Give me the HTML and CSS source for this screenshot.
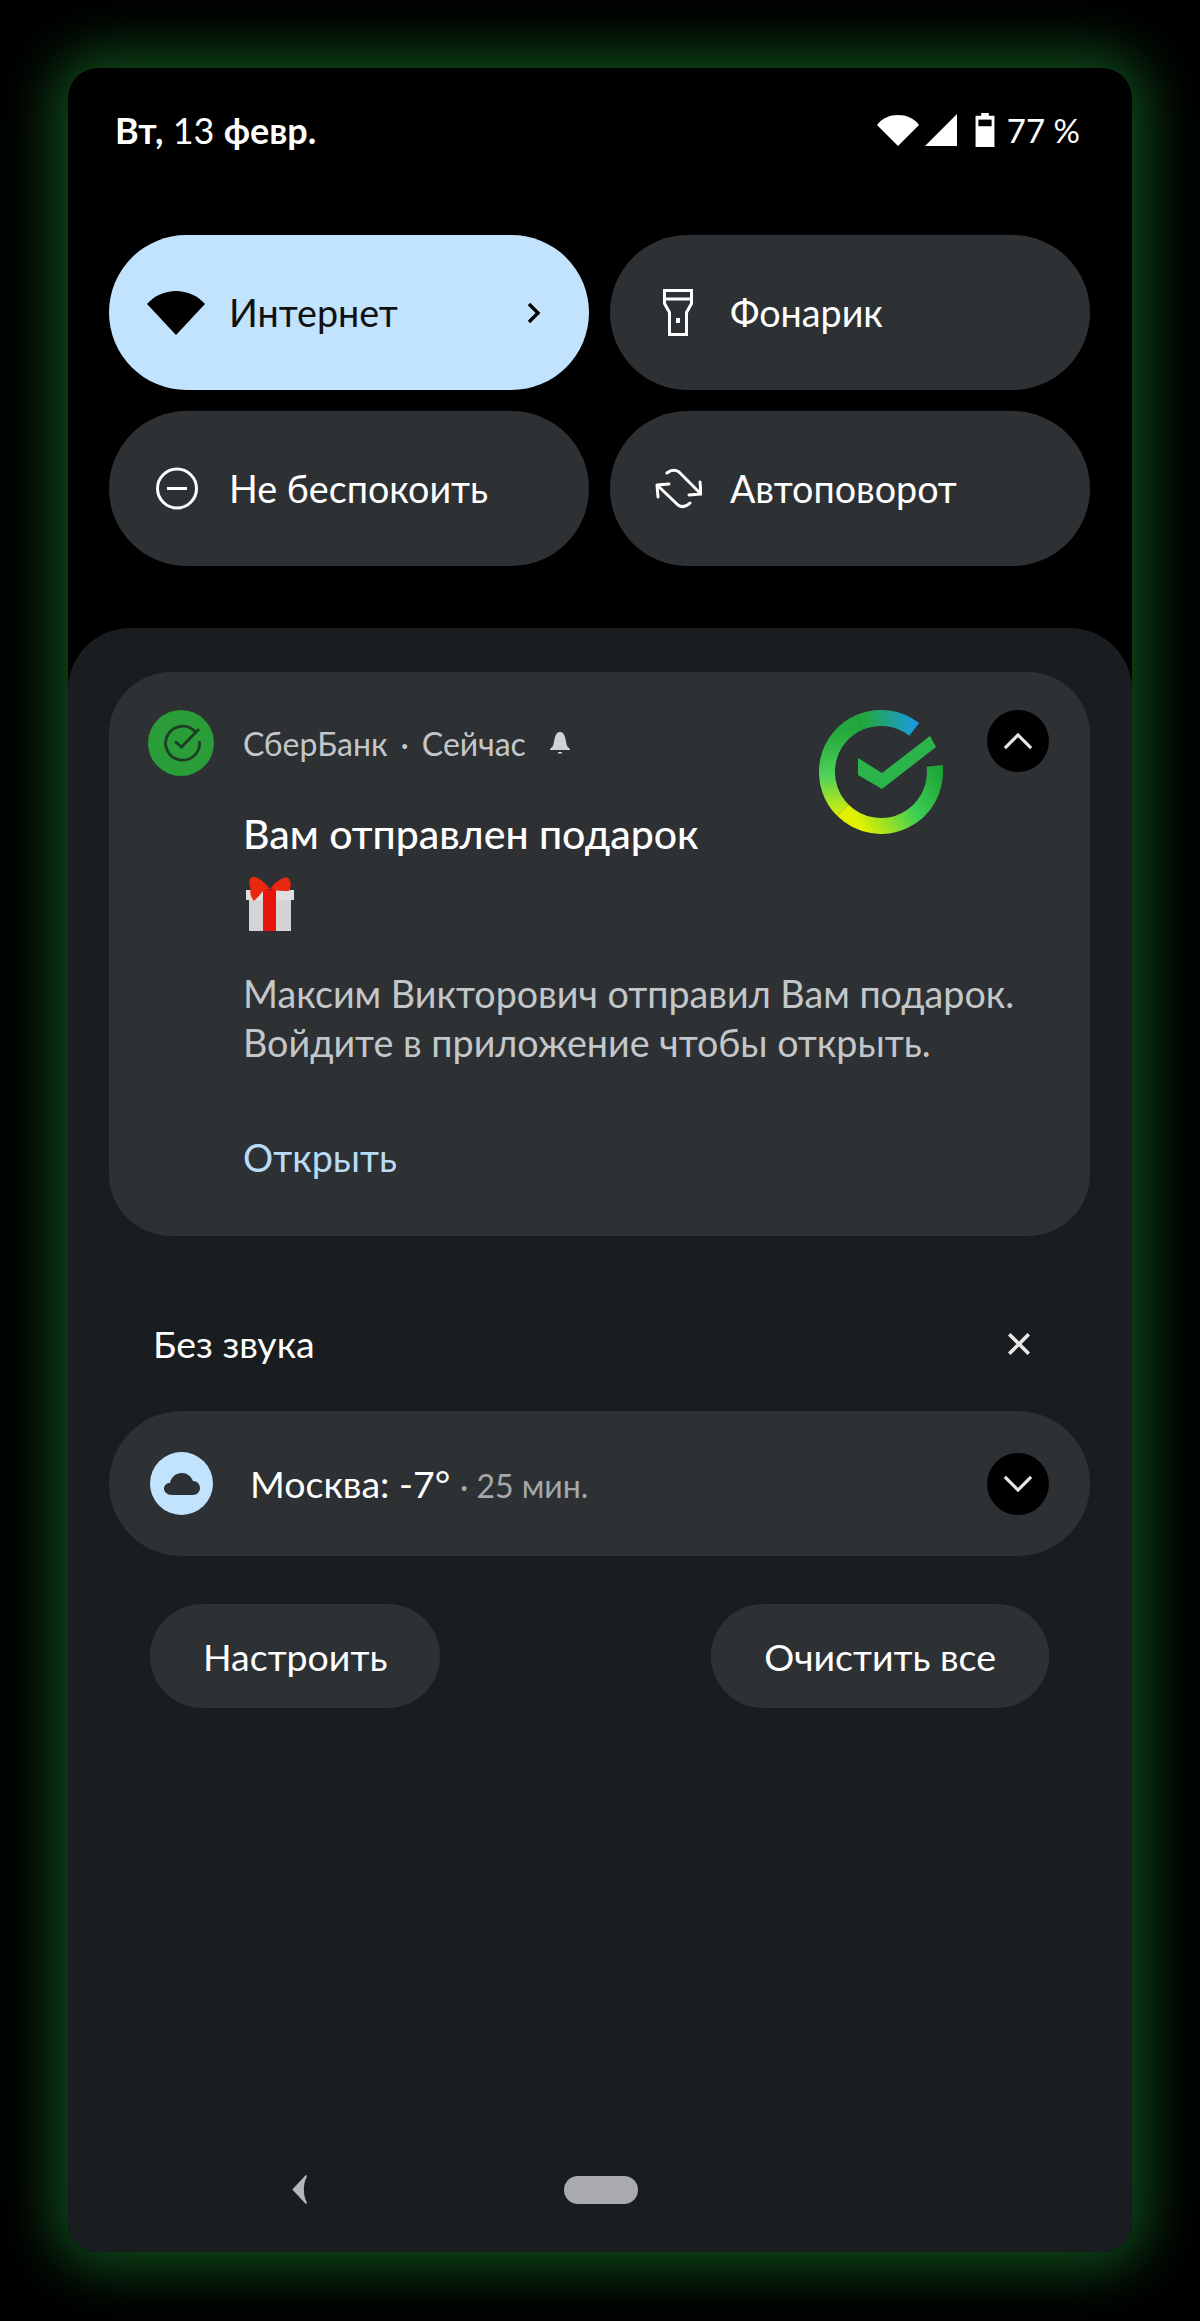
FILE: index.html
```html
<!DOCTYPE html>
<html lang="ru">
<head>
<meta charset="utf-8">
<title>Уведомления</title>
<link rel="stylesheet" href="styles.css">
</head>
<body>
<main class="phone">
  <header class="status">
    <div class="date"><b>Вт,</b> 13 <b>февр.</b></div>
    <div class="status-right">
      <svg class="st-wifi" viewBox="0 0 42 32"><path d="M0 11C5 4 13 1 21 1s16 3 21 10L21 32z" fill="#fff"/></svg>
      <svg class="st-signal" viewBox="0 0 32 32"><path d="M32 0v32H0z" fill="#fff"/></svg>
      <svg class="st-batt" viewBox="0 0 20 36"><path d="M6 0h8v3h6v33H0V3h6z" fill="#fff"/><rect x="3" y="7" width="14" height="7" fill="#000"/></svg>
      <span class="pct">77 %</span>
    </div>
  </header>

  <section class="tiles">
    <div class="tile tile-on">
      <svg class="ti-wifi" viewBox="0 0 58 44"><path d="M0 13C7 5 18 0 29 0s22 5 29 13L29 44z" fill="#000"/></svg>
      <span class="tile-label">Интернет</span>
      <svg class="ti-chev" viewBox="0 0 16 24"><path d="M3 3l9 9-9 9" fill="none" stroke="#000" stroke-width="3.4"/></svg>
    </div>
    <div class="tile">
      <svg class="ti-icon" viewBox="0 0 44 47"><path d="M8.500 1.500h27v13l-5 9v22h-17v-22l-5-9zM8.500 10h27" fill="none" stroke="#fff" stroke-width="3"/><rect x="20" y="29" width="4" height="5" fill="#fff"/></svg>
      <span class="tile-label">Фонарик</span>
    </div>
    <div class="tile">
      <svg class="ti-icon" viewBox="0 0 44 44"><circle cx="22" cy="22" r="19.5" fill="none" stroke="#fff" stroke-width="3"/><path d="M12 22h20" stroke="#fff" stroke-width="3"/></svg>
      <span class="tile-label">Не беспокоить</span>
    </div>
    <div class="tile">
      <svg class="ti-rotate" viewBox="0 0 47 42"><path d="M12 5Q18 0 24 4L46 26M34 27L46 26L45 14M35 35Q29 41 23 37L2 17M14 16L2 17L3 29" fill="none" stroke="#fff" stroke-width="3" stroke-linecap="round" stroke-linejoin="round"/></svg>
      <span class="tile-label">Автоповорот</span>
    </div>
  </section>

  <section class="panel">
    <article class="card">
      <div class="app-icon">
        <svg viewBox="0 0 66 66"><circle cx="33" cy="33" r="33" fill="#2a9c38"/><path d="M47 21.500A17 17 0 1 0 51.500 31" fill="none" stroke="#1d3f26" stroke-width="2.800"/><path d="M27 31.500l6.500 5.500L51 19" fill="none" stroke="#1d3f26" stroke-width="2.800"/></svg>
      </div>
      <div class="app-line"><span>СберБанк</span><i>·</i><span>Сейчас</span>
        <svg class="bell" viewBox="0 0 24 24"><path d="M12 1c3 0 4 2 5 5l2 9 3 3v1H2v-1l3-3 2-9c1-3 2-5 5-5zM10 21h4v1.500h-4z" fill="#d0d3d5"/></svg>
      </div>
      <svg class="logo" viewBox="0 0 124 124">
        <defs>
          <linearGradient id="g1" gradientUnits="userSpaceOnUse" x1="95" y1="15" x2="45" y2="15"><stop offset="0" stop-color="#1a9bdc"/><stop offset="1" stop-color="#22a83c"/></linearGradient>
          <linearGradient id="g2" gradientUnits="userSpaceOnUse" x1="30" y1="20" x2="36" y2="108"><stop offset="0" stop-color="#22a83c"/><stop offset=".5" stop-color="#4fd25a"/><stop offset="1" stop-color="#e3f000"/></linearGradient>
          <linearGradient id="g3" gradientUnits="userSpaceOnUse" x1="36" y1="108" x2="116" y2="56"><stop offset="0" stop-color="#e3f000"/><stop offset=".55" stop-color="#3ecf55"/><stop offset="1" stop-color="#1da638"/></linearGradient>
        </defs>
        <path d="M95.200 19.400A54 54 0 0 0 41 12.200" fill="none" stroke="url(#g1)" stroke-width="16"/>
        <path d="M41 12.200A54 54 0 0 0 23.800 100.200" fill="none" stroke="url(#g2)" stroke-width="16"/>
        <path d="M23.800 100.200A54 54 0 0 0 115.600 55.900" fill="none" stroke="url(#g3)" stroke-width="16"/>
        <path d="M39 48l24 15 48-37 6 11-54 42-24-14z" fill="#2bb44a"/>
      </svg>
      <div class="chev-btn chev-card"><svg viewBox="0 0 32 20"><path d="M2 17L16 3l14 14" fill="none" stroke="#e6e6e6" stroke-width="3.4"/></svg></div>
      <h2 class="card-title">Вам отправлен подарок</h2>
      <svg class="gift" viewBox="0 0 48 56">
        <rect x="3" y="19" width="42" height="37" fill="#d4d4d4"/>
        <rect x="0" y="15" width="48" height="10" fill="#dedede"/>
        <rect x="17" y="15" width="13" height="41" fill="#e8130c"/>
        <path d="M24 14C19 7 10 0 6 2 2 4 3 10 5 14c-2 3 0 9 3 12 3-3 6-6 9-10l7-2zM24 14c5-7 14-13 18-11 4 3 3 10 1 13-6 0-13 0-19-2z" fill="#e8280f"/>
      </svg>
      <p class="card-text">Максим Викторович отправил Вам подарок.<br>Войдите в приложение чтобы открыть.</p>
      <div class="card-action">Открыть</div>
    </article>

    <div class="silent">
      <span>Без звука</span>
      <svg class="close" viewBox="0 0 24 24"><path d="M3 3l18 18M21 3L3 21" stroke="#e8e8e8" stroke-width="3.4"/></svg>
    </div>

    <div class="weather">
      <div class="weather-ic"><svg viewBox="0 0 36 24"><path d="M8 23C3 23 0 20 0 16.500S3 11 6 11C7 5 12 1 18 1c5 0 9 3 11 8 4 0 7 3 7 7s-3 7-7 7z" fill="#2d3135"/></svg></div>
      <div class="weather-text">Москва: -7° <small>· 25 мин.</small></div>
      <div class="chev-btn"><svg viewBox="0 0 32 20"><path d="M2 3l14 14L30 3" fill="none" stroke="#e6e6e6" stroke-width="3.4"/></svg></div>
    </div>

    <div class="actions">
      <button class="action">Настроить</button>
      <button class="action">Очистить все</button>
    </div>

    <nav class="navbar">
      <svg class="nav-back" viewBox="0 0 16 32"><path d="M14 1c1 0 1 1 1 2-4 7-4 19 0 26 0 1 0 2-1 2L1 17c-1-1-1-1 0-2z" fill="#b4b7ba"/></svg>
      <span class="nav-home"></span>
    </nav>
  </section>
</main>
</body>
</html>
```
FILE: styles.css
```css
* { box-sizing: border-box; }
html, body { margin: 0; background: #000; }
body { width: 1200px; height: 2321px; padding: 68px 68px 69px; font-family: "Lato", "Noto Sans", sans-serif; color: #fff; }
svg { display: block; }

.phone {
  width: 1064px; height: 2184px; background: #000; border-radius: 30px;
  display: flex; flex-direction: column;
  box-shadow: 0 0 56px 14px #10501c;
}

.status { height: 167px; padding: 47px 52px 0 47px; display: flex; justify-content: space-between; align-items: flex-start; }
.date { font-size: 36px; line-height: 30px; font-weight: 400; }
.date b { font-weight: 700; }
.status-right { display: flex; align-items: center; height: 30px; }
.st-wifi { width: 42px; height: 32px; }
.st-signal { width: 32px; height: 32px; margin-left: 6px; }
.st-batt { width: 20px; height: 34px; margin-left: 18px; }
.pct { font-size: 33px; margin-left: 12px; line-height: 30px; }

.tiles { display: grid; grid-template-columns: 480px 480px; gap: 21px; padding-left: 41px; }
.tile { height: 155px; border-radius: 78px; background: #2e3134; display: flex; align-items: center; padding-left: 46px; font-size: 37.700px; }
.tile-on { background: #c2e3fd; color: #111; padding-left: 38px; }
.ti-wifi { width: 58px; height: 44px; margin-right: 24px; }
.ti-icon { width: 44px; height: 47px; margin-right: 30px; }
.ti-rotate { width: 47px; height: 42px; margin-right: 28px; margin-left: -1px; }
.tile-label { flex: 1; }
.ti-chev { width: 22px; height: 24px; margin-right: 44px; }

.panel { flex: 1; margin-top: 62px; background: #1a1d20; border-radius: 62px 62px 30px 30px; padding: 44px 42px 0 41px; display: flex; flex-direction: column; }

.card {
  height: 564px; border-radius: 62px; background: #2e3134; padding: 38px 0 0 39px;
  display: grid; grid-template-columns: 66px 29px 619px 125px 62px 1fr; grid-template-rows: 66px 94px 70px 127px auto; align-content: start;
}
.app-icon { grid-column: 1; grid-row: 1; width: 66px; height: 66px; }
.app-line { grid-column: 3; grid-row: 1; font-size: 32px; color: #c4c7c9; display: flex; align-items: center; height: 66px; white-space: nowrap; }
.app-line i { font-style: normal; margin: 0 13px; }
.bell { width: 24px; height: 24px; margin-left: 22px; }
.logo { grid-column: 3 / 5; grid-row: 1 / 3; justify-self: end; width: 124px; height: 124px; margin-right: 44px; }
.chev-card { grid-column: 5; grid-row: 1; }
.chev-btn { width: 62px; height: 62px; border-radius: 50%; background: #000; display: flex; align-items: center; justify-content: center; }
.chev-btn svg { width: 30px; height: 19px; }
.card-title { grid-column: 3 / 6; grid-row: 2; margin: 0; font-size: 41px; font-weight: 500; line-height: 72px; align-self: end; }
.gift { grid-column: 3; grid-row: 3; width: 48px; height: 56px; margin: 5px 0 0 3px; }
.card-text { grid-column: 3 / 7; grid-row: 4; margin: 29px 0 0; font-size: 37.700px; line-height: 49px; color: #c4c7c9; white-space: nowrap; }
.card-action { grid-column: 3; grid-row: 5; margin-top: 68px; font-size: 37.700px; color: #b8dcf8; }

.silent { display: flex; justify-content: space-between; align-items: center; padding: 40px 58px 0 44px; height: 175px; font-size: 37.500px; }
.close { width: 26px; height: 26px; }

.weather { height: 145px; border-radius: 73px; background: #2e3134; display: flex; align-items: center; padding: 0 41px; }
.weather-ic { width: 63px; height: 63px; border-radius: 50%; background: #c2e3fd; display: flex; align-items: center; justify-content: center; }
.weather-ic svg { width: 36px; height: 24px; }
.weather-text { flex: 1; margin-left: 37px; font-size: 37.500px; }
.weather-text small { font-size: 32px; color: #a5a8aa; }

.actions { display: flex; justify-content: space-between; padding: 0 41px; margin-top: 48px; }
.action { height: 104px; border: 0; border-radius: 52px; background: #2e3134; color: #fff; font: inherit; font-size: 37.500px; padding: 0 53px; }

.navbar { margin-top: auto; margin-left: -41px; padding: 0 0 47px 222px; display: flex; align-items: center; gap: 254px; }
.nav-back { width: 20px; height: 31px; }
.nav-home { width: 74px; height: 28px; border-radius: 14px; background: #a8aaad; }
```
